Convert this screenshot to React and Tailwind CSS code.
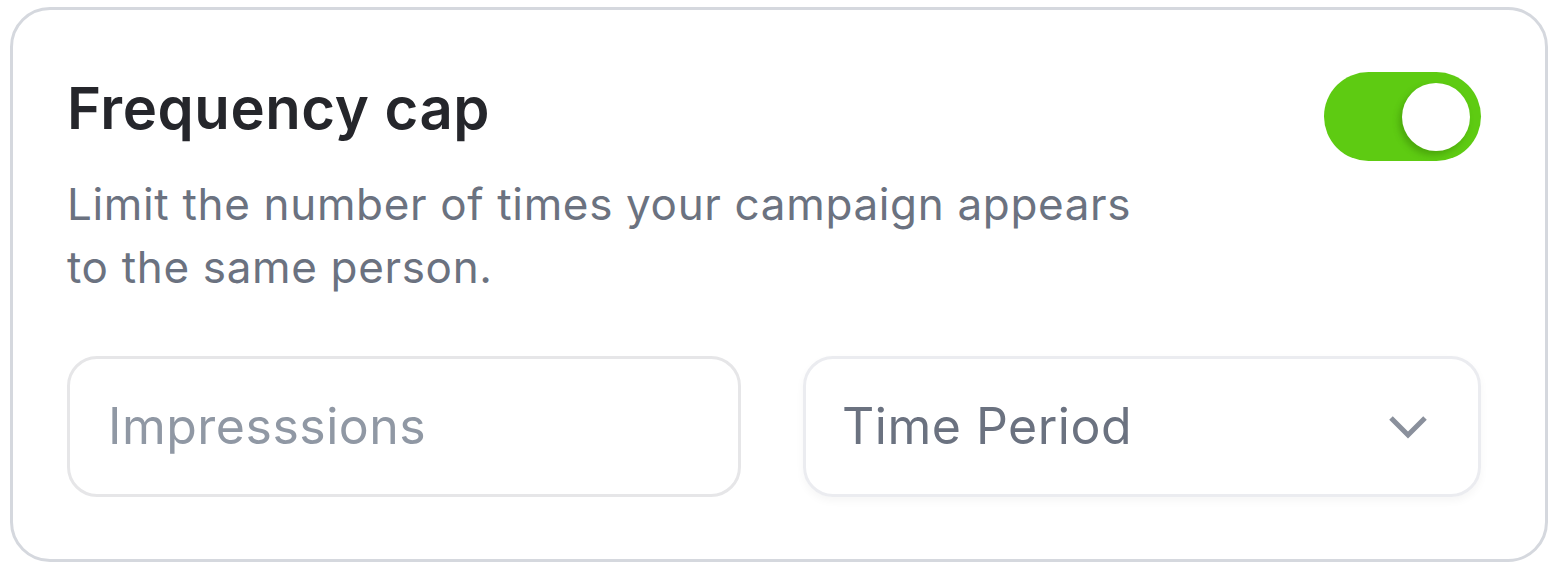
export default function App() {
  return (
    <div className="w-[1556px] h-[576px] bg-white pl-[10px] pt-[7px]" style={{ fontFamily: "Inter, 'Noto Sans', sans-serif" }}>
      <div className="w-[1538px] h-[555px] rounded-[40px] border-[3px] border-[#d5d8de] bg-white px-[54px] pt-[63px]">
        <div className="flex items-start justify-between">
          <div>
            <h2 className="text-[58px] leading-[70px] font-semibold text-[#25262b] tracking-[0.01em]">Frequency cap</h2>
            <p className="mt-[30px] text-[44px] leading-[63px] text-[#6b7280] tracking-[0.015em] w-[1100px]">
              Limit the number of times your campaign appears to the same person.
            </p>
          </div>
          <div className="-mt-[1px] mr-[10px] w-[157px] h-[89px] rounded-full bg-[#5ecb12] flex items-center justify-end pr-[11px]">
            <div className="w-[68px] h-[68px] rounded-full bg-white shadow-[-3px_4px_6px_rgba(40,100,0,0.35)]" />
          </div>
        </div>
        <div className="mt-[57px] flex gap-[62px]">
          <div className="w-[674px] h-[141px] rounded-[30px] border-[3px] border-[#e6e6e8] flex items-center pl-[38px]">
            <span className="text-[50px] text-[#9098a4] tracking-[0.01em]">Impresssions</span>
          </div>
          <div className="w-[678px] h-[141px] rounded-[30px] border-[3px] border-[#ebecf0] shadow-[0_4px_8px_rgba(0,0,0,0.04)] flex items-center justify-between pl-[36px] pr-[50px]">
            <span className="text-[50px] text-[#6b7280] tracking-[0.01em]">Time Period</span>
            <svg width="40" height="24" viewBox="0 0 40 24" fill="none">
              <path d="M3 3 L20 20 L37 3" stroke="#8a909c" strokeWidth="5" />
            </svg>
          </div>
        </div>
      </div>
    </div>
  );
}
